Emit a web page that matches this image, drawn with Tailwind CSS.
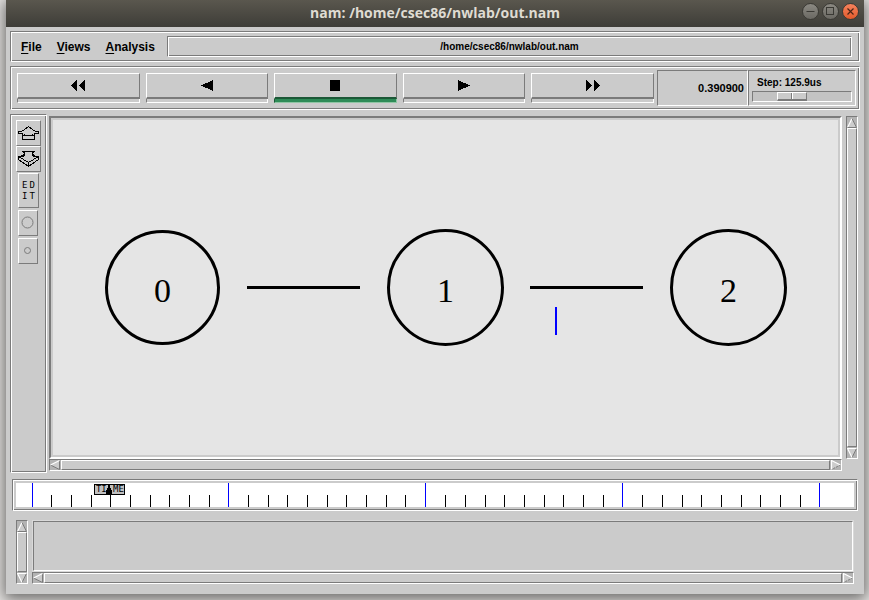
<!DOCTYPE html>
<html lang="en">
<head>
<meta charset="utf-8">
<meta name="viewport" content="width=device-width, initial-scale=1">
<title>nam: /home/csec86/nwlab/out.nam</title>
<script src="https://cdn.jsdelivr.net/npm/@tailwindcss/browser@4"></script>
</head>
<body class="flex h-screen overflow-hidden bg-[#e6e4e2] pr-[5px] pb-[6px] pl-[6px] font-['Liberation_Sans',Arial,sans-serif] text-black">

<!-- Shared symbols for scrollbar arrows -->
<svg class="hidden" aria-hidden="true">
  <symbol id="arrow-up" viewBox="0 0 10 10"><path d="M5 0L9.500 9.500H.5Z" fill="#ccc"/><path d="M.5 9.500L5 .5" stroke="#fff" stroke-width="1.200"/><path d="M5 .5L9.500 9.500H.5" fill="none" stroke="#7b7b7b"/></symbol>
  <symbol id="arrow-down" viewBox="0 0 10 10"><path d="M.5 .5H9.500L5 9.500Z" fill="#ccc"/><path d="M9.500 .5L5 9.500" stroke="#7b7b7b"/><path d="M9.500 .5H.5L5 9.500" fill="none" stroke="#fff" stroke-width="1.200"/></symbol>
  <symbol id="arrow-left" viewBox="0 0 10 10"><path d="M.5 5L9.500 .5V9.500Z" fill="#ccc"/><path d="M9.500 .5V9.500L.5 5" fill="none" stroke="#7b7b7b"/><path d="M.5 5L9.500 .5" stroke="#fff" stroke-width="1.200"/></symbol>
  <symbol id="arrow-right" viewBox="0 0 10 10"><path d="M.5 .5L9.500 5L.5 9.500Z" fill="#ccc"/><path d="M9.500 5L.5 9.500" stroke="#7b7b7b" stroke-dasharray="2 1"/><path d="M.5 9.500V.5L9.500 5" fill="none" stroke="#fff" stroke-width="1.200"/></symbol>
</svg>

<div class="flex min-w-0 flex-1 flex-col bg-[#cbcbcb] shadow-[0_3px_14px_2px_rgba(0,0,0,0.55)]">

  <header class="relative flex h-[27px] shrink-0 items-center justify-center bg-linear-to-b from-[#5a574e] to-[#3e3d38]">
    <h1 class="pb-[2px] font-['Open_Sans','Noto_Sans',sans-serif] text-[14px] leading-[20px] font-bold text-[#dfdbd2]">nam: /home/csec86/nwlab/out.nam</h1>
    <div class="absolute top-[3px] right-[5px] flex gap-[3px]">
      <button aria-label="Minimize" class="flex size-[17px] items-center justify-center rounded-full border border-[#3a3934] bg-linear-to-b from-[#8b8982] to-[#6b6963]">
        <svg class="size-[9px]" viewBox="0 0 9 9"><path d="M.5 4.500H8.500" stroke="#3a3934"/></svg></button>
      <button aria-label="Maximize" class="flex size-[17px] items-center justify-center rounded-full border border-[#3a3934] bg-linear-to-b from-[#8b8982] to-[#6b6963]">
        <svg class="size-[9px]" viewBox="0 0 9 9"><rect x=".5" y=".5" width="7" height="7" fill="none" stroke="#3a3934"/></svg></button>
      <button aria-label="Close" class="flex size-[17px] items-center justify-center rounded-full border border-[#3a3934] bg-linear-to-b from-[#f5825c] to-[#e25a2a]">
        <svg class="size-[9px]" viewBox="0 0 9 9"><path d="M1.500 1.500L7.500 7.500M7.500 1.500L1.500 7.500" stroke="#4a2416" stroke-width="1.200"/></svg></button>
    </div>
  </header>

  <main class="flex min-h-0 flex-1 flex-col px-1 pt-1 pb-[10px]">

    <nav class="flex h-[31px] shrink-0 items-center border border-t-[#7b7b7b] border-r-white border-b-white border-l-[#7b7b7b] pr-[7px] pl-[10px] shadow-[inset_1px_1px_#fff,inset_-1px_-1px_#7b7b7b]">
      <div class="flex w-[146px] shrink-0 gap-[15px] text-[12px] leading-[16px] font-bold">
        <button accesskey="f"><span class="underline underline-offset-2">F</span>ile</button>
        <button accesskey="v"><span class="underline underline-offset-2">V</span>iews</button>
        <button accesskey="a"><span class="underline underline-offset-2">A</span>nalysis</button>
      </div>
      <div class="flex h-[21px] flex-1 items-center justify-center border border-t-[#7b7b7b] border-r-white border-b-white border-l-[#7b7b7b] text-[10px] leading-[14px] font-bold shadow-[inset_1px_1px_#fff,inset_-1px_-1px_#7b7b7b]">/home/csec86/nwlab/out.nam</div>
    </nav>

    <section aria-label="Playback" class="mt-1 flex h-[44px] shrink-0 border border-t-[#7b7b7b] border-r-white border-b-white border-l-[#7b7b7b] py-[3px] pr-[3px] pl-[6px] shadow-[inset_1px_1px_#fff,inset_-1px_-1px_#7b7b7b]">
      <div class="grid flex-1 grid-cols-5 gap-[6px] pt-[3px] pr-[3px]">
        <div>
          <button aria-label="Rewind" class="flex h-[26px] w-full items-center justify-center border border-t-white border-r-[#7b7b7b] border-b-2 border-b-[#7b7b7b] border-l-white"><svg class="h-[11px] w-[14px]" viewBox="0 0 14 11" shape-rendering="crispEdges"><path d="M6 0V11L0 5.500ZM14 0V11L8 5.500Z"/></svg></button>
          <div class="h-1 border border-t-0 border-r-white border-b-white border-l-[#7b7b7b]"></div>
        </div>
        <div>
          <button aria-label="Play backward" class="flex h-[26px] w-full items-center justify-center border border-t-white border-r-[#7b7b7b] border-b-2 border-b-[#7b7b7b] border-l-white"><svg class="h-[11px] w-[12px]" viewBox="0 0 12 11" shape-rendering="crispEdges"><path d="M12 0V11L0 5.500Z"/></svg></button>
          <div class="h-1 border border-t-0 border-r-white border-b-white border-l-[#7b7b7b]"></div>
        </div>
        <div>
          <button aria-label="Stop" class="flex h-[26px] w-full items-center justify-center border border-t-white border-r-[#7b7b7b] border-b-2 border-b-[#1c5837] border-l-white"><svg class="h-[11px] w-[10px]" viewBox="0 0 10 11"><path d="M0 0H10V11H0Z"/></svg></button>
          <div class="h-1 border border-t-0 border-r-[#8ec5a3] border-b-[#8ec5a3] border-l-[#1c5837] bg-[#2e8b57]"></div>
        </div>
        <div>
          <button aria-label="Play" class="flex h-[26px] w-full items-center justify-center border border-t-white border-r-[#7b7b7b] border-b-2 border-b-[#7b7b7b] border-l-white"><svg class="h-[11px] w-[12px]" viewBox="0 0 12 11" shape-rendering="crispEdges"><path d="M0 0V11L12 5.500Z"/></svg></button>
          <div class="h-1 border border-t-0 border-r-white border-b-white border-l-[#7b7b7b]"></div>
        </div>
        <div>
          <button aria-label="Fast forward" class="flex h-[26px] w-full items-center justify-center border border-t-white border-r-[#7b7b7b] border-b-2 border-b-[#7b7b7b] border-l-white"><svg class="h-[11px] w-[14px]" viewBox="0 0 14 11" shape-rendering="crispEdges"><path d="M0 0V11L6 5.500ZM8 0V11L14 5.500Z"/></svg></button>
          <div class="h-1 border border-t-0 border-r-white border-b-white border-l-[#7b7b7b]"></div>
        </div>
      </div>
      <div class="flex w-[91px] items-center justify-end border border-t-[#7b7b7b] border-r-white border-b-white border-l-[#7b7b7b] pr-[3px] text-[11px] leading-[14px] font-bold">0.390900</div>
      <div class="flex w-[108px] flex-col border border-t-[#7b7b7b] border-r-white border-b-white border-l-[#7b7b7b] px-[3px] pt-1">
        <label for="step" class="pl-[5px] text-[10px] leading-[15px] font-bold">Step: 125.9us</label>
        <input id="step" type="range" min="0" max="100" value="36" class="mt-px h-[11px] w-full appearance-none border border-t-[#7b7b7b] border-r-white border-b-white border-l-[#7b7b7b] bg-[#c3c3c3] [&::-webkit-slider-thumb]:h-[9px] [&::-webkit-slider-thumb]:w-[30px] [&::-webkit-slider-thumb]:appearance-none [&::-webkit-slider-thumb]:border [&::-webkit-slider-thumb]:border-t-white [&::-webkit-slider-thumb]:border-r-[#7b7b7b] [&::-webkit-slider-thumb]:border-b-2 [&::-webkit-slider-thumb]:border-b-[#7b7b7b] [&::-webkit-slider-thumb]:border-l-white [&::-webkit-slider-thumb]:bg-[linear-gradient(90deg,#cbcbcb_13px,#7b7b7b_13px,#7b7b7b_14px,#fff_14px,#fff_15px,#cbcbcb_15px)]">
      </div>
    </section>

    <div class="mt-1 flex min-h-0 flex-1">
      <aside aria-label="Tools" class="flex w-[37px] shrink-0 flex-col items-center border border-t-[#7b7b7b] border-r-white border-b-white border-l-[#7b7b7b] pt-[5px] shadow-[inset_1px_1px_#fff,inset_-1px_-1px_#7b7b7b]">
        <button aria-label="Zoom in" class="flex h-[26px] w-[25px] items-center justify-center border border-t-white border-r-[#7b7b7b] border-b-[#7b7b7b] border-l-white">
          <svg class="h-[14px] w-[21px]" viewBox="0 0 21 14" fill="none" stroke="#000" shape-rendering="crispEdges"><path d="M10.500 .5L6.500 3.500L3.500 5.500H.5V7.500H4.500V13.500H16.500V7.500H20.500V5.500H17.500L14.500 3.500ZM4.500 9.500H16.500M6.500 7.500V9.500M14.500 7.500V9.500"/></svg></button>
        <button aria-label="Zoom out" class="flex h-[26px] w-[25px] items-center justify-center border border-t-white border-r-[#7b7b7b] border-b-[#7b7b7b] border-l-white">
          <svg class="h-[16px] w-[21px]" viewBox="0 0 21 16" fill="none" stroke="#000" shape-rendering="crispEdges"><path d="M4.500 .5H16.500L14.500 2.500V4.500L16.500 5.500H20.500V8.500L10.500 15.500L.5 8.500V5.500H4.500L6.500 4.500V2.500ZM.5 5.500L10.500 11.500L20.500 5.500M10.500 10.500V15.500M6.500 1V3.500L3.500 4.500M14.500 1V3.500L17.500 4.500"/></svg></button>
        <button aria-label="Edit" class="mt-px flex h-[35px] w-[21px] flex-col items-center justify-center border border-t-white border-r-[#7b7b7b] border-b-[#7b7b7b] border-l-white font-['DejaVu_Sans_Mono',monospace] text-[9px] leading-[11px]"><span class="flex gap-[2px]"><span>E</span><span>D</span></span><span class="flex gap-[2px]"><span>I</span><span>T</span></span></button>
        <button aria-label="Larger nodes" class="mt-[2px] mr-px flex h-[26px] w-[20px] items-center justify-center border border-t-white border-r-[#7b7b7b] border-b-[#7b7b7b] border-l-white">
          <svg class="size-[14px]" viewBox="0 0 14 14"><circle cx="6.500" cy="6.500" r="5.500" fill="none" stroke="#7b7b7b"/></svg></button>
        <button aria-label="Smaller nodes" class="mt-[2px] mr-px flex h-[26px] w-[20px] items-center justify-center border border-t-white border-r-[#7b7b7b] border-b-[#7b7b7b] border-l-white">
          <svg class="size-[8px]" viewBox="0 0 8 8"><circle cx="3.500" cy="3.500" r="3" fill="none" stroke="#7b7b7b"/></svg></button>
      </aside>

      <div class="ml-[2px] flex min-w-0 flex-1 flex-col py-[2px]">
        <div class="min-h-0 flex-1 border-2 border-t-[#7b7b7b] border-r-white border-b-white border-l-[#7b7b7b] bg-[#cbcbcb] p-[2px]">
          <svg class="size-full bg-[#e5e5e5]" viewBox="53 120 785 335" role="img" aria-label="Network topology">
            <g fill="none" stroke="#000" stroke-width="3">
              <circle cx="162.500" cy="287.500" r="56"/>
              <circle cx="445.500" cy="287.500" r="57"/>
              <circle cx="728.500" cy="287.500" r="57"/>
              <path d="M247 287.500H360M530 287.500H643"/>
            </g>
            <path d="M556 307V335" stroke="#00f" stroke-width="2"/>
            <g class="font-['Liberation_Serif','Times_New_Roman',serif] text-[34px]" text-anchor="middle">
              <text x="162.500" y="302">0</text>
              <text x="445.500" y="302">1</text>
              <text x="728.500" y="302">2</text>
            </g>
          </svg>
        </div>
        <div class="flex h-[12px] shrink-0 border border-t-[#7b7b7b] border-r-white border-b-white border-l-[#7b7b7b] bg-[#b3b3b3]">
          <button aria-label="Scroll left" class="w-[11px]"><svg class="size-[10px]"><use href="#arrow-left"/></svg></button>
          <div class="flex-1 border border-t-white border-r-[#7b7b7b] border-b-[#7b7b7b] border-l-white bg-[#cbcbcb]"></div>
          <button aria-label="Scroll right" class="w-[11px] pl-px"><svg class="size-[10px]"><use href="#arrow-right"/></svg></button>
        </div>
      </div>

      <div class="mt-[2px] mr-[2px] mb-[14px] ml-1 flex w-[12px] shrink-0 flex-col border border-t-[#7b7b7b] border-r-white border-b-white border-l-[#7b7b7b] bg-[#b3b3b3]">
        <button aria-label="Scroll up" class="h-[11px]"><svg class="size-[10px]"><use href="#arrow-up"/></svg></button>
        <div class="flex-1 border border-t-white border-r-[#7b7b7b] border-b-[#7b7b7b] border-l-white bg-[#cbcbcb]"></div>
        <button aria-label="Scroll down" class="h-[11px] pt-px"><svg class="size-[10px]"><use href="#arrow-down"/></svg></button>
      </div>
    </div>

    <section aria-label="Timeline" class="mx-[2px] mt-[6px] h-[32px] shrink-0 border border-t-[#7b7b7b] border-r-white border-b-white border-l-[#7b7b7b] p-[3px] shadow-[inset_1px_1px_#fff,inset_-1px_-1px_#7b7b7b]">
      <div class="relative h-full bg-white">
        <svg class="size-full" viewBox="0 0 838 24" preserveAspectRatio="none" shape-rendering="crispEdges" fill="none">
          <path stroke="#000" d="M35.500 12V24M55.500 12V24M75.500 12V24M94.500 12V24M114.500 12V24M134.500 12V24M153.500 12V24M173.500 12V24M193.500 12V24M232.500 12V24M252.500 12V24M271.500 12V24M291.500 12V24M311.500 12V24M330.500 12V24M350.500 12V24M370.500 12V24M389.500 12V24M429.500 12V24M449.500 12V24M469.500 12V24M488.500 12V24M508.500 12V24M528.500 12V24M547.500 12V24M567.500 12V24M587.500 12V24M626.500 12V24M646.500 12V24M666.500 12V24M685.500 12V24M705.500 12V24M725.500 12V24M744.500 12V24M764.500 12V24M784.500 12V24"/>
          <path stroke="#00f" d="M16.500 0V24M212.500 0V24M409.500 0V24M606.500 0V24M803.500 0V24"/>
        </svg>
        <div class="absolute top-px left-[9.3%] flex h-[11px] w-[31px] items-center justify-between border border-black bg-[#c0c0c0] pl-px font-['DejaVu_Sans_Mono',monospace] text-[9px] leading-[9px]">
          <span>TI</span>
          <svg class="absolute top-0 left-[11px] h-[9px] w-[6px]" viewBox="0 0 6 9" shape-rendering="crispEdges"><path d="M2 0H4V3H5V5H6V9H0V5H1V3H2Z"/></svg>
          <span>ME</span>
        </div>
      </div>
    </section>

    <section aria-label="Annotations" class="mt-[9px] flex h-[64px] shrink-0 gap-1 pr-[6px] pl-[6px]">
      <div class="flex w-[12px] shrink-0 flex-col border border-t-[#7b7b7b] border-r-white border-b-white border-l-[#7b7b7b] bg-[#b3b3b3]">
        <button aria-label="Scroll up" class="h-[11px]"><svg class="size-[10px]"><use href="#arrow-up"/></svg></button>
        <div class="flex-1 border border-t-white border-r-[#7b7b7b] border-b-[#7b7b7b] border-l-white bg-[#cbcbcb]"></div>
        <button aria-label="Scroll down" class="h-[11px] pt-px"><svg class="size-[10px]"><use href="#arrow-down"/></svg></button>
      </div>
      <div class="flex min-w-0 flex-1 flex-col">
        <div class="flex-1 border border-[#d9d9d9]"><div class="h-full border border-t-[#7b7b7b] border-r-white border-b-white border-l-[#7b7b7b]"></div></div>
        <div class="flex h-[12px] shrink-0 border border-t-[#7b7b7b] border-r-white border-b-white border-l-[#7b7b7b] bg-[#b3b3b3]">
          <button aria-label="Scroll left" class="w-[11px]"><svg class="size-[10px]"><use href="#arrow-left"/></svg></button>
          <div class="flex-1 border border-t-white border-r-[#7b7b7b] border-b-[#7b7b7b] border-l-white bg-[#cbcbcb]"></div>
          <button aria-label="Scroll right" class="w-[11px] pl-px"><svg class="size-[10px]"><use href="#arrow-right"/></svg></button>
        </div>
      </div>
    </section>
  </main>
</div>
</body>
</html>
